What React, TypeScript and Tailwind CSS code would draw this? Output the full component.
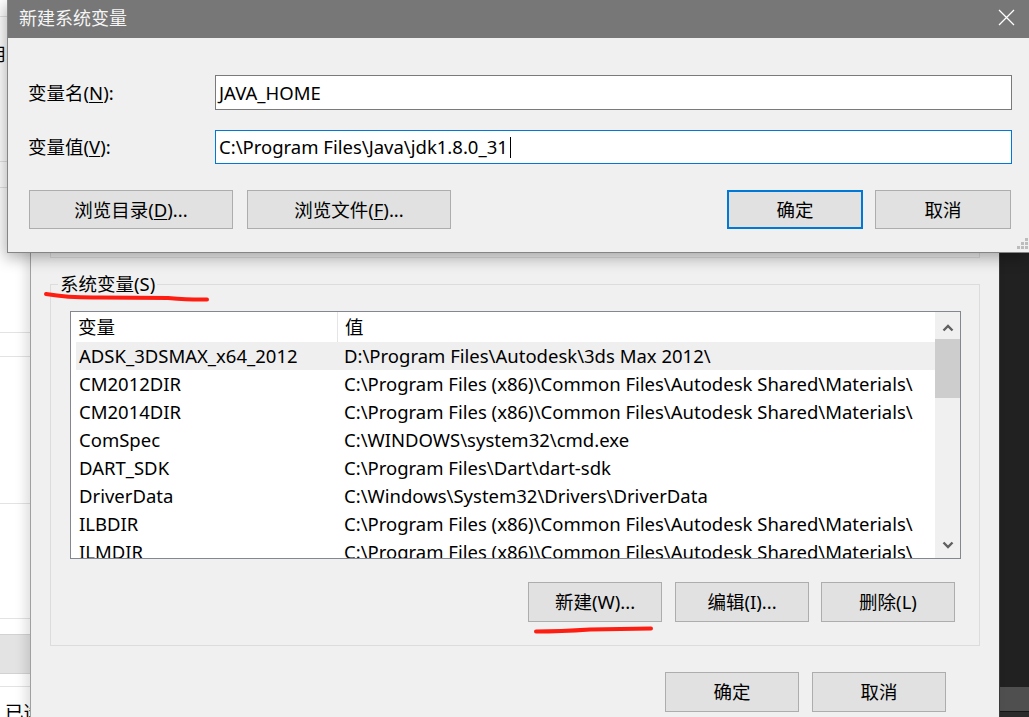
import React from "react";

const FONT = "font-['Noto_Sans','Noto_Sans_CJK_SC',sans-serif]";

function Btn({
  children,
  className = "",
  focus = false,
}: {
  children: React.ReactNode;
  className?: string;
  focus?: boolean;
}) {
  return (
    <div
      className={`flex items-center justify-center bg-[#e1e1e1] text-[18.5px] text-black ${
        focus ? "border-2 border-[#0078d7]" : "border border-[#adadad]"
      } ${className}`}
    >
      {children}
    </div>
  );
}

function Chevron({ up }: { up: boolean }) {
  return (
    <svg width="12" height="8" viewBox="0 0 12 8">
      <polyline
        points={up ? "1.5,6.5 6,2 10.5,6.5" : "1.5,1.5 6,6 10.5,1.5"}
        fill="none"
        stroke="#606060"
        strokeWidth="2.4"
      />
    </svg>
  );
}

const MAT = "C:\\Program Files (x86)\\Common Files\\Autodesk Shared\\Materials\\";
const ROWS: [string, string][] = [
  ["ADSK_3DSMAX_x64_2012", "D:\\Program Files\\Autodesk\\3ds Max 2012\\"],
  ["CM2012DIR", MAT],
  ["CM2014DIR", MAT],
  ["ComSpec", "C:\\WINDOWS\\system32\\cmd.exe"],
  ["DART_SDK", "C:\\Program Files\\Dart\\dart-sdk"],
  ["DriverData", "C:\\Windows\\System32\\Drivers\\DriverData"],
  ["ILBDIR", MAT],
  ["ILMDIR", MAT],
];

function LeftStrip() {
  return (
    <div className="absolute left-0 top-0 w-[30px] h-[717px] bg-white flex flex-col overflow-hidden">
      <div className="h-[17px] shrink-0 border-b border-[#e3e3e3]" />
      <div className="h-[145px] shrink-0 border-b border-[#e3e3e3] relative">
        <div className="mt-[27px] -ml-[12px] text-[18px] leading-[20px] text-black whitespace-nowrap">
          用<span className="text-[#e0b000]">.</span>
        </div>
      </div>
      <div className="h-[26px] shrink-0 border-b border-[#e3e3e3]" />
      <div className="h-[145px] shrink-0 border-b border-[#e3e3e3]" />
      <div className="h-[24px] shrink-0 border-b border-[#e3e3e3]" />
      <div className="h-[147px] shrink-0 border-b border-[#e3e3e3]" />
      <div className="h-[115px] shrink-0 border-b border-[#e3e3e3]" />
      <div className="h-[15px] shrink-0" />
      <div className="h-[40px] shrink-0 bg-[#e3e3e3] border-y border-[#d2d2d2]" />
      <div className="h-[13px] shrink-0 border-b border-[#e3e3e3]" />
      <div className="pl-[5px] pt-[15px] text-[18.5px] leading-[20px] whitespace-nowrap text-black">已选择</div>
    </div>
  );
}

function BackWindow() {
  return (
    <div className="absolute left-[30px] top-0 w-[970px] h-[717px] bg-[#f0f0f0] border-l border-[#a0a0a0] border-r border-r-[#3a3a3a] shadow-[-5px_0_10px_rgba(0,0,0,0.12)] flex flex-col pl-[19px]">
      {/* user variables group (mostly hidden) */}
      <div className="mt-[57px] h-[201px] w-[930px] shrink-0 border border-[#dcdcdc]" />

      {/* system variables group */}
      <div className="mt-[26px] h-[362px] w-[930px] shrink-0 border border-[#dcdcdc] relative flex flex-col pl-[19px] pt-[26px]">
        <span className="absolute top-[-12px] left-[7px] px-[2px] bg-[#f0f0f0] text-[18.5px] leading-[22px] text-black">
          系统变量(S)
        </span>

        <div className="w-[891px] h-[248px] shrink-0 border border-[#828790] bg-white flex">
          <div className="flex-1 flex flex-col overflow-hidden">
            <div className="h-[30px] shrink-0 flex text-[18.5px] text-black">
              <div className="w-[267px] h-full pl-[7px] flex items-center border-r border-[#e5e5e5]">变量</div>
              <div className="pl-[7px] flex items-center">值</div>
            </div>
            {ROWS.map(([k, v], i) => (
              <div
                key={k}
                className={`h-[28px] shrink-0 ml-[5px] flex items-center text-[18.5px] text-black whitespace-nowrap ${
                  i === 0 ? "bg-[#efefef]" : ""
                }`}
              >
                <div className="w-[261px] pl-[3px] shrink-0 overflow-hidden">{k}</div>
                <div className="pl-[7px] overflow-hidden">{v}</div>
              </div>
            ))}
          </div>
          <div className="w-[25px] shrink-0 bg-[#f0f0f0] flex flex-col">
            <div className="h-[27px] shrink-0 flex items-center justify-center pt-[4px]">
              <Chevron up />
            </div>
            <div className="h-[59px] shrink-0 bg-[#cdcdcd]" />
            <div className="flex-1" />
            <div className="h-[27px] shrink-0 flex items-center justify-center">
              <Chevron up={false} />
            </div>
          </div>
        </div>

        <div className="mt-[23px] flex justify-end pr-[24px] gap-[12px]">
          <Btn className="w-[134px] h-[40px] mr-[1px]">新建(W)...</Btn>
          <Btn className="w-[134px] h-[40px]">编辑(I)...</Btn>
          <Btn className="w-[134px] h-[40px]">删除(L)</Btn>
        </div>
      </div>

      <div className="mt-[26px] w-[930px] flex justify-end pr-[34px] gap-[13px]">
        <Btn className="w-[134px] h-[40px]">确定</Btn>
        <Btn className="w-[134px] h-[40px]">取消</Btn>
      </div>
    </div>
  );
}

function FrontDialog() {
  return (
    <div className="absolute left-[7px] top-0 w-[1023px] h-[253px] bg-[#f0f0f0] border-l border-b border-[#858585] shadow-[-2px_5px_14px_rgba(0,0,0,0.3)] flex flex-col">
      <div className="h-[38px] shrink-0 bg-[#777777] flex items-center justify-between pl-[11px] pr-[15px]">
        <span className="text-[18px] text-[#f5f5f5] leading-[22px] -mt-[2px]">新建系统变量</span>
        <svg width="17" height="17" viewBox="0 0 17 17" className="-mt-[4px]">
          <path d="M1 1 L16 16 M16 1 L1 16" stroke="#ffffff" strokeWidth="1.3" />
        </svg>
      </div>

      <div className="flex flex-col pl-[20px] pr-[18px] pt-[37px]">
        <div className="h-[35px] flex items-center">
          <div className="w-[187px] shrink-0 text-[18.5px] text-black">
            变量名(<span className="underline underline-offset-2">N</span>):
          </div>
          <div className="flex-1 h-full bg-white border border-[#7a7a7a] flex items-center pl-[3px] text-[18.5px] text-black">
            JAVA_HOME
          </div>
        </div>

        <div className="mt-[20px] h-[34px] flex items-center">
          <div className="w-[187px] shrink-0 text-[18.5px] text-black">
            变量值(<span className="underline underline-offset-2">V</span>):
          </div>
          <div className="flex-1 h-full bg-white border border-[#0078d7] flex items-center pl-[3px] text-[18.5px] text-black whitespace-nowrap">
            C:\Program Files\Java\jdk1.8.0_31
            <span className="inline-block w-[1px] h-[21px] bg-black ml-[2px]" />
          </div>
        </div>

        <div className="mt-[26px] h-[39px] flex">
          <Btn className="w-[204px] h-[39px] ml-[1px]">
            浏览目录(<span className="underline underline-offset-2">D</span>)...
          </Btn>
          <Btn className="w-[204px] h-[39px] ml-[14px]">
            浏览文件(<span className="underline underline-offset-2">F</span>)...
          </Btn>
          <div className="flex-1" />
          <Btn focus className="w-[136px] h-[39px]">确定</Btn>
          <Btn className="w-[136px] h-[39px] ml-[12px] mr-[1px]">取消</Btn>
        </div>
      </div>

      <svg className="absolute right-[1px] bottom-[2px]" width="12" height="12" viewBox="0 0 12 12">
        <rect x="8" y="0" width="3" height="3" fill="#bcbcbc" />
        <rect x="4" y="4" width="3" height="3" fill="#bcbcbc" />
        <rect x="8" y="4" width="3" height="3" fill="#bcbcbc" />
        <rect x="0" y="8" width="3" height="3" fill="#bcbcbc" />
        <rect x="4" y="8" width="3" height="3" fill="#bcbcbc" />
        <rect x="8" y="8" width="3" height="3" fill="#bcbcbc" />
      </svg>
    </div>
  );
}

export default function App() {
  return (
    <div className={`relative w-[1029px] h-[717px] overflow-hidden bg-[#212121] ${FONT}`}>
      <LeftStrip />
      {/* desktop piece at right bottom */}
      <div className="absolute left-[1000px] top-[687px] w-[29px] h-[25px] bg-[#4f4f4f] border-b border-[#161616]" />
      <div className="absolute left-[1000px] top-[712px] w-[29px] h-[5px] bg-[#2b2b2b]" />
      <BackWindow />
      <FrontDialog />

      {/* red annotation strokes */}
      <svg className="absolute left-0 top-0 pointer-events-none" width="1029" height="717">
        <path
          d="M46 294 Q 70 298 100 297.5 L 168 298 Q 192 300 207 299.5"
          fill="none"
          stroke="#ff1d12"
          strokeWidth="4"
          strokeLinecap="round"
        />
        <path
          d="M536 631.5 Q 560 631.5 590 629.5 L 651 628.5"
          fill="none"
          stroke="#ff1d12"
          strokeWidth="4"
          strokeLinecap="round"
        />
      </svg>
    </div>
  );
}
